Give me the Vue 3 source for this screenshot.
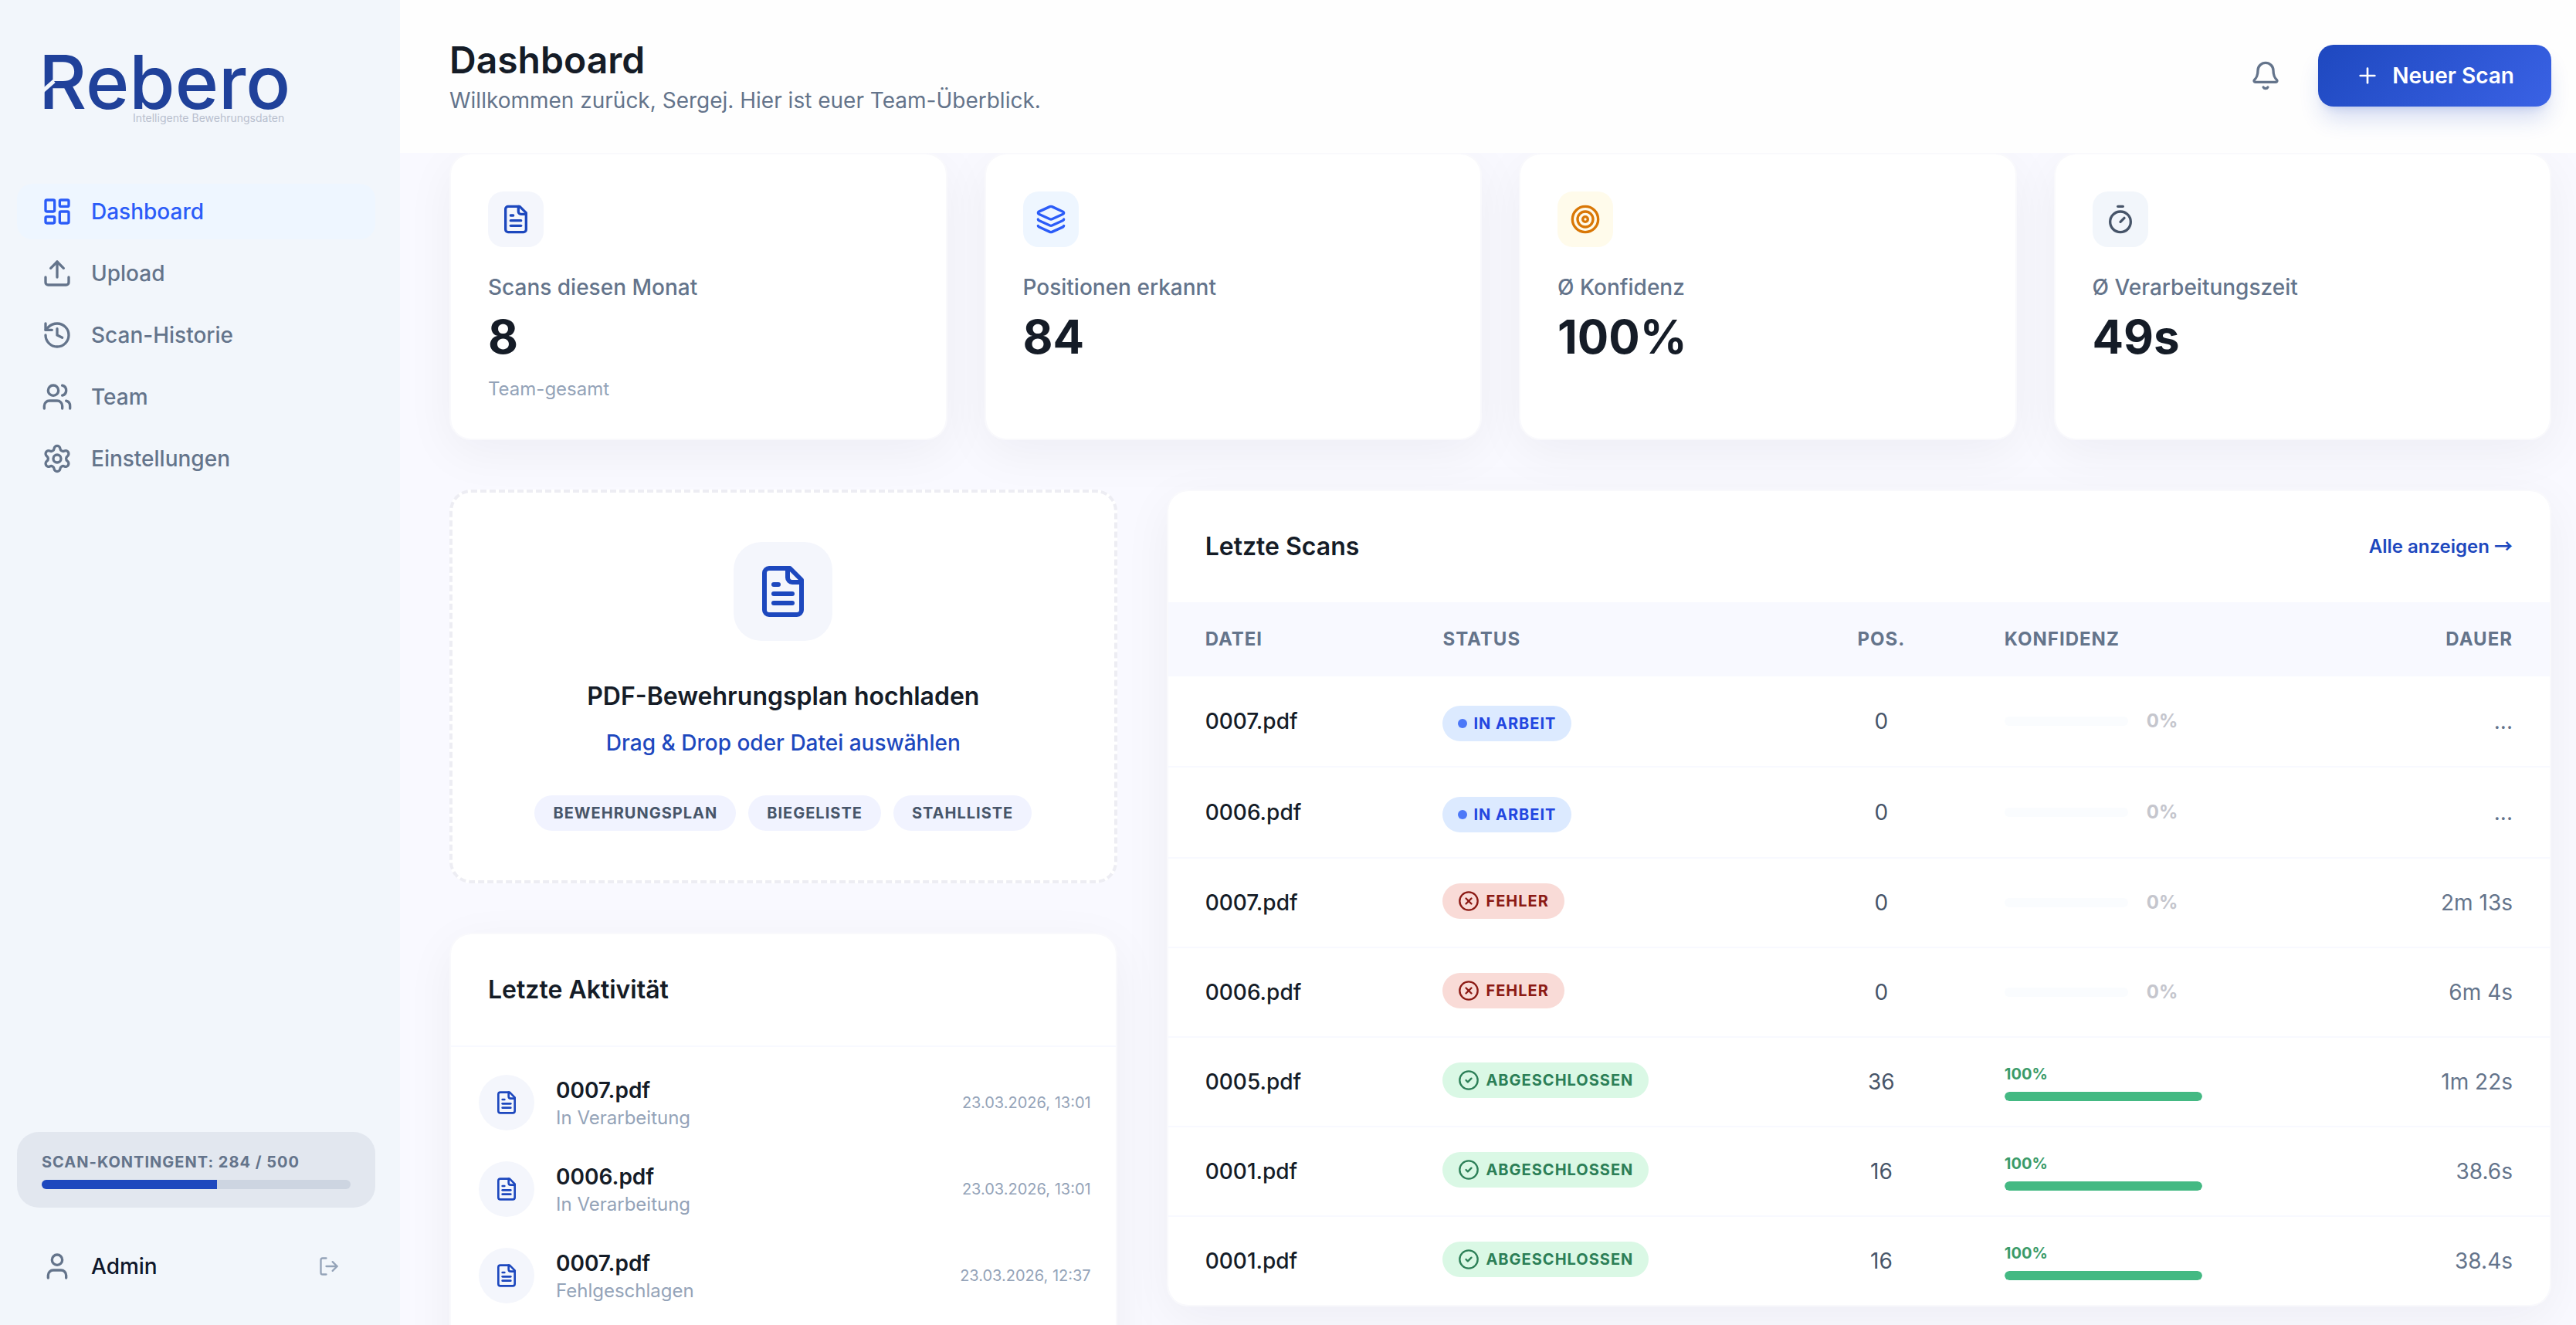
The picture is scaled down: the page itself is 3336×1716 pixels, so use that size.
<script setup>
const icons = {
  dashboard: '<rect width="7" height="9" x="3" y="3" rx="1"/><rect width="7" height="5" x="14" y="3" rx="1"/><rect width="7" height="9" x="14" y="12" rx="1"/><rect width="7" height="5" x="3" y="16" rx="1"/>',
  upload: '<path d="M21 15v4a2 2 0 0 1-2 2H5a2 2 0 0 1-2-2v-4"/><path d="m17 8-5-5-5 5"/><path d="M12 3v12"/>',
  history: '<path d="M3 12a9 9 0 1 0 9-9 9.75 9.75 0 0 0-6.74 2.74L3 8"/><path d="M3 3v5h5"/><path d="M12 7v5l4 2"/>',
  team: '<path d="M16 21v-2a4 4 0 0 0-4-4H6a4 4 0 0 0-4 4v2"/><circle cx="9" cy="7" r="4"/><path d="M22 21v-2a4 4 0 0 0-3-3.87"/><path d="M16 3.13a4 4 0 0 1 0 7.75"/>',
  settings: '<path d="M9.671 4.136a2.34 2.34 0 0 1 4.659 0 2.34 2.34 0 0 0 3.319 1.915 2.34 2.34 0 0 1 2.33 4.033 2.34 2.34 0 0 0 0 3.831 2.34 2.34 0 0 1-2.33 4.033 2.34 2.34 0 0 0-3.319 1.915 2.34 2.34 0 0 1-4.659 0 2.34 2.34 0 0 0-3.32-1.915 2.34 2.34 0 0 1-2.33-4.033 2.34 2.34 0 0 0 0-3.831A2.34 2.34 0 0 1 6.35 6.051a2.34 2.34 0 0 0 3.319-1.915"/><circle cx="12" cy="12" r="3"/>',
  user: '<path d="M19 21v-2a4 4 0 0 0-4-4H9a4 4 0 0 0-4 4v2"/><circle cx="12" cy="7" r="4"/>',
  logout: '<path d="M9 21H5a2 2 0 0 1-2-2V5a2 2 0 0 1 2-2h4"/><path d="m16 17 5-5-5-5"/><path d="M21 12H9"/>',
  bell: '<path d="M10.268 21a2 2 0 0 0 3.464 0"/><path d="M3.262 15.326A1 1 0 0 0 4 17h16a1 1 0 0 0 .74-1.673C19.41 13.956 18 12.499 18 8A6 6 0 0 0 6 8c0 4.499-1.411 5.956-2.738 7.326"/>',
  plus: '<path d="M5 12h14"/><path d="M12 5v14"/>',
  file: '<path d="M15 2H6a2 2 0 0 0-2 2v16a2 2 0 0 0 2 2h12a2 2 0 0 0 2-2V7Z"/><path d="M14 2v4a2 2 0 0 0 2 2h4"/><path d="M10 9H8"/><path d="M16 13H8"/><path d="M16 17H8"/>',
  layers: '<path d="m12.83 2.18a2 2 0 0 0-1.66 0L2.6 6.08a1 1 0 0 0 0 1.83l8.58 3.91a2 2 0 0 0 1.66 0l8.58-3.9a1 1 0 0 0 0-1.83Z"/><path d="M2 12a1 1 0 0 0 .58.91l8.6 3.91a2 2 0 0 0 1.65 0l8.58-3.9A1 1 0 0 0 22 12"/><path d="M2 17a1 1 0 0 0 .58.91l8.6 3.91a2 2 0 0 0 1.65 0l8.58-3.9A1 1 0 0 0 22 17"/>',
  target: '<circle cx="12" cy="12" r="10"/><circle cx="12" cy="12" r="6"/><circle cx="12" cy="12" r="2"/>',
  timer: '<path d="M10 2h4"/><path d="m12 14 3-3"/><circle cx="12" cy="14" r="8"/>',
  error: '<circle cx="12" cy="12" r="10"/><path d="m15 9-6 6"/><path d="m9 9 6 6"/>',
  done: '<circle cx="12" cy="12" r="10"/><path d="m9 12 2 2 4-4"/>',
}

const nav = [
  { label: 'Dashboard', icon: 'dashboard', active: true },
  { label: 'Upload', icon: 'upload' },
  { label: 'Scan-Historie', icon: 'history' },
  { label: 'Team', icon: 'team' },
  { label: 'Einstellungen', icon: 'settings' },
]

const quota = { used: 284, total: 500 }

const stats = [
  { label: 'Scans diesen Monat', value: '8', note: 'Team-gesamt', icon: 'file', tone: 'primary' },
  { label: 'Positionen erkannt', value: '84', icon: 'layers', tone: 'blue' },
  { label: 'Ø Konfidenz', value: '100%', icon: 'target', tone: 'amber' },
  { label: 'Ø Verarbeitungszeit', value: '49s', icon: 'timer', tone: 'slate' },
]

const documentTypes = ['Bewehrungsplan', 'Biegeliste', 'Stahlliste']

const activities = [
  { file: '0007.pdf', state: 'In Verarbeitung', time: '23.03.2026, 13:01' },
  { file: '0006.pdf', state: 'In Verarbeitung', time: '23.03.2026, 13:01' },
  { file: '0007.pdf', state: 'Fehlgeschlagen', time: '23.03.2026, 12:37' },
]

const statusLabels = { working: 'In Arbeit', error: 'Fehler', done: 'Abgeschlossen' }

const scans = [
  { file: '0007.pdf', status: 'working', positions: 0, confidence: 0, duration: '...' },
  { file: '0006.pdf', status: 'working', positions: 0, confidence: 0, duration: '...' },
  { file: '0007.pdf', status: 'error', positions: 0, confidence: 0, duration: '2m 13s' },
  { file: '0006.pdf', status: 'error', positions: 0, confidence: 0, duration: '6m 4s' },
  { file: '0005.pdf', status: 'done', positions: 36, confidence: 100, duration: '1m 22s' },
  { file: '0001.pdf', status: 'done', positions: 16, confidence: 100, duration: '38.6s' },
  { file: '0001.pdf', status: 'done', positions: 16, confidence: 100, duration: '38.4s' },
]
</script>

<template>
  <div class="app">
    <aside class="sidebar">
      <a class="logo" href="#">
        <span class="logo-name">Rebero
          <svg class="logo-cut" viewBox="0 0 20 18" aria-hidden="true"><path d="M0 16 16 2" /></svg>
        </span>
        <span class="logo-claim">Intelligente Bewehrungsdaten</span>
      </a>

      <nav class="nav">
        <a v-for="item in nav" :key="item.label" href="#" class="nav-item" :class="{ active: item.active }">
          <svg class="icon icon-m" viewBox="0 0 24 24" v-html="icons[item.icon]" />
          <span>{{ item.label }}</span>
        </a>
      </nav>

      <div class="quota">
        <p class="quota-label">Scan-Kontingent: {{ quota.used }} / {{ quota.total }}</p>
        <div class="quota-track">
          <div class="quota-fill" :style="{ width: (quota.used / quota.total) * 100 + '%' }" />
        </div>
      </div>

      <div class="account">
        <svg class="icon icon-m" viewBox="0 0 24 24" v-html="icons.user" />
        <span class="account-name">Admin</span>
        <button type="button" class="logout" aria-label="Abmelden">
          <svg class="icon icon-xs" viewBox="0 0 24 24" v-html="icons.logout" />
        </button>
      </div>
    </aside>

    <div class="main">
      <header class="topbar">
        <div>
          <h1>Dashboard</h1>
          <p class="subtitle">Willkommen zurück, Sergej. Hier ist euer Team-Überblick.</p>
        </div>
        <div class="topbar-actions">
          <button type="button" class="bell" aria-label="Benachrichtigungen">
            <svg class="icon icon-m" viewBox="0 0 24 24" v-html="icons.bell" />
          </button>
          <button type="button" class="new-scan">
            <svg class="icon icon-s" viewBox="0 0 24 24" v-html="icons.plus" />
            Neuer Scan
          </button>
        </div>
      </header>

      <main class="content">
        <section class="stats">
          <article v-for="stat in stats" :key="stat.label" class="card stat">
            <div class="stat-icon" :class="stat.tone">
              <svg class="icon icon-m" viewBox="0 0 24 24" v-html="icons[stat.icon]" />
            </div>
            <p class="stat-label">{{ stat.label }}</p>
            <p class="stat-value">{{ stat.value }}</p>
            <p v-if="stat.note" class="stat-note">{{ stat.note }}</p>
          </article>
        </section>

        <section class="columns">
          <div class="column-left">
            <div class="dropzone">
              <div class="dropzone-icon">
                <svg class="icon icon-l" viewBox="0 0 24 24" v-html="icons.file" />
              </div>
              <h2 class="dropzone-title">PDF-Bewehrungsplan hochladen</h2>
              <button type="button" class="dropzone-action">Drag &amp; Drop oder Datei auswählen</button>
              <ul class="tags">
                <li v-for="type in documentTypes" :key="type" class="tag">{{ type }}</li>
              </ul>
            </div>

            <div class="card">
              <div class="card-head divided">
                <h2>Letzte Aktivität</h2>
              </div>
              <ul class="activities">
                <li v-for="(entry, i) in activities" :key="i" class="activity">
                  <div class="activity-icon">
                    <svg class="icon icon-s" viewBox="0 0 24 24" v-html="icons.file" />
                  </div>
                  <div class="activity-text">
                    <p class="activity-file">{{ entry.file }}</p>
                    <p class="activity-state">{{ entry.state }}</p>
                  </div>
                  <time class="activity-time">{{ entry.time }}</time>
                </li>
              </ul>
            </div>
          </div>

          <div class="card column-right">
            <div class="card-head">
              <h2>Letzte Scans</h2>
              <a href="#" class="show-all">Alle anzeigen <span class="arrow">→</span></a>
            </div>
            <table class="scans">
              <colgroup>
                <col class="col-file"><col class="col-status"><col class="col-pos"><col class="col-conf"><col>
              </colgroup>
              <thead>
                <tr>
                  <th>Datei</th>
                  <th>Status</th>
                  <th class="center">Pos.</th>
                  <th>Konfidenz</th>
                  <th class="right">Dauer</th>
                </tr>
              </thead>
              <tbody>
                <tr v-for="(scan, i) in scans" :key="i" :class="scan.status">
                  <td class="file">{{ scan.file }}</td>
                  <td class="status">
                    <span class="badge" :class="scan.status">
                      <span v-if="scan.status === 'working'" class="dot" />
                      <svg v-else class="icon icon-xs" viewBox="0 0 24 24" v-html="icons[scan.status]" />
                      {{ statusLabels[scan.status] }}
                    </span>
                  </td>
                  <td class="positions center">{{ scan.positions }}</td>
                  <td>
                    <div v-if="scan.confidence" class="confidence">
                      <span class="confidence-value">{{ scan.confidence }}%</span>
                      <div class="confidence-track">
                        <div class="confidence-fill" :style="{ width: scan.confidence + '%' }" />
                      </div>
                    </div>
                    <div v-else class="confidence-none">
                      <div class="none-track" />
                      <span>0%</span>
                    </div>
                  </td>
                  <td class="duration right">{{ scan.duration }}</td>
                </tr>
              </tbody>
            </table>
          </div>
        </section>
      </main>
    </div>
  </div>
</template>

<style>
body {
  margin: 0;
  background: #f9f9ff;
}
</style>

<style scoped>
.app {
  display: flex;
  height: 100vh;
  overflow: hidden;
  background: #f9f9ff;
  color: #151c27;
  font-family: Inter, "Liberation Sans", sans-serif;
  font-size: 28px;
  line-height: 40px;
}
.app *,
.app *::before {
  box-sizing: border-box;
}
h1, h2, p, ul {
  margin: 0;
  padding: 0;
}
ul {
  list-style: none;
}
a {
  text-decoration: none;
}
button {
  margin: 0;
  padding: 0;
  border: 0;
  background: none;
  font: inherit;
  cursor: pointer;
}
.icon {
  display: block;
  flex: none;
  fill: none;
  stroke: currentColor;
  stroke-width: 2;
  stroke-linecap: round;
  stroke-linejoin: round;
}
.icon-xs { width: 28px; height: 28px; }
.icon-s { width: 32px; height: 32px; }
.icon-m { width: 40px; height: 40px; }
.icon-l { width: 72px; height: 72px; }

/* Sidebar */
.sidebar {
  display: flex;
  flex-direction: column;
  flex: none;
  width: 518px;
  padding: 66px 32px 40px 22px;
  background: #f2f6fb;
}
.logo {
  display: flex;
  flex-direction: column;
  align-self: flex-start;
  margin: 0 0 78px 28px;
}
.logo-name {
  position: relative;
  color: #20419a;
  font-size: 96px;
  font-weight: 500;
  line-height: 80px;
}
.logo-cut {
  position: absolute;
  left: 4px;
  top: 37px;
  width: 20px;
  height: 18px;
  fill: none;
  stroke: #f2f6fb;
  stroke-width: 5;
}
.logo-claim {
  align-self: flex-end;
  padding-right: 8px;
  color: #b9c0cf;
  font-size: 14px;
  line-height: 14px;
}
.nav {
  display: flex;
  flex-direction: column;
  flex: 1;
  gap: 8px;
}
.nav-item {
  display: flex;
  align-items: center;
  gap: 24px;
  height: 72px;
  padding: 0 32px;
  border-radius: 20px;
  color: #64748b;
  font-weight: 500;
}
.nav-item.active {
  background: #eef6ff;
  color: #2b5cf8;
}
.quota {
  padding: 24px 32px;
  border-radius: 28px;
  background: #e2e7ef;
}
.quota-label {
  color: #64748b;
  font-size: 20px;
  font-weight: 700;
  letter-spacing: 1px;
  line-height: 30px;
  text-transform: uppercase;
}
.quota-track {
  height: 12px;
  margin-top: 8px;
  border-radius: 6px;
  background: #cdd5e1;
  overflow: hidden;
}
.quota-fill {
  height: 100%;
  background: #1d48be;
}
.account {
  display: flex;
  align-items: center;
  gap: 24px;
  height: 72px;
  margin-top: 40px;
  padding: 0 32px;
  color: #64748b;
}
.account-name {
  flex: 1;
  color: #0f172a;
  font-weight: 500;
}
.logout {
  padding: 14px;
  color: #94a3b8;
}

/* Top bar */
.main {
  display: flex;
  flex-direction: column;
  flex: 1;
  min-width: 0;
}
.topbar {
  position: relative;
  z-index: 1;
  display: flex;
  align-items: center;
  justify-content: space-between;
  flex: none;
  padding: 50px 32px 52px 64px;
  background: #fefefe;
}
h1 {
  font-size: 48px;
  font-weight: 600;
  line-height: 56px;
}
.subtitle {
  margin-top: 8px;
  color: #64748b;
  line-height: 32px;
}
.topbar-actions {
  display: flex;
  align-items: center;
  gap: 32px;
  height: 80px;
}
.bell {
  padding: 16px;
  color: #64748b;
}
.new-scan {
  display: flex;
  align-items: center;
  gap: 16px;
  height: 80px;
  padding: 0 48px;
  border-radius: 20px;
  background: linear-gradient(135deg, #1e48bf, #3a62e5);
  box-shadow: 0 20px 30px -6px rgba(30, 72, 191, 0.2), 0 8px 12px -8px rgba(30, 72, 191, 0.2);
  color: #fff;
  font-weight: 600;
}

/* Content */
.content {
  flex: 1;
  padding: 0 32px 64px 64px;
}
.card {
  border: 2px solid #f9f9fc;
  border-radius: 28px;
  background: #fff;
  background-clip: padding-box;
  box-shadow: 0 16px 64px rgba(21, 28, 39, 0.05);
}
.stats {
  display: grid;
  grid-template-columns: repeat(4, 1fr);
  gap: 48px;
}
.stat {
  padding: 48px;
}
.stat-icon {
  display: flex;
  align-items: center;
  justify-content: center;
  width: 72px;
  height: 72px;
  margin-bottom: 32px;
  border-radius: 20px;
}
.stat-icon.primary { background: #f4f6fc; color: #1d48be; }
.stat-icon.blue { background: #eef6ff; color: #2b5cf8; }
.stat-icon.amber { background: #fffbeb; color: #d97706; }
.stat-icon.slate { background: #f2f6fb; color: #475569; }
.stat-label {
  color: #64748b;
  font-weight: 500;
}
.stat-value {
  margin-top: 8px;
  font-size: 60px;
  font-weight: 700;
  line-height: 72px;
}
.stat-note {
  margin-top: 16px;
  color: #94a3b8;
  font-size: 24px;
  line-height: 32px;
}
.columns {
  display: grid;
  grid-template-columns: repeat(12, 1fr);
  align-items: start;
  gap: 64px;
  margin-top: 64px;
}
.column-left {
  display: flex;
  flex-direction: column;
  grid-column: span 4;
  gap: 64px;
}
.column-right {
  grid-column: span 8;
}

/* Upload */
.dropzone {
  display: flex;
  flex-direction: column;
  align-items: center;
  padding: 64px;
  border: 4px dashed #ededf3;
  border-radius: 28px;
  background: #fff;
}
.dropzone-icon {
  display: flex;
  align-items: center;
  justify-content: center;
  width: 128px;
  height: 128px;
  margin-bottom: 48px;
  border-radius: 36px;
  background: #f4f6fc;
  color: #1d48be;
}
h2 {
  font-size: 32px;
  font-weight: 600;
  line-height: 48px;
}
.dropzone-action {
  margin-top: 16px;
  color: #1d48be;
  font-weight: 500;
}
.tags {
  display: flex;
  gap: 16px;
  margin-top: 48px;
}
.tag {
  padding: 8px 24px;
  border-radius: 24px;
  background: #f1f3ff;
  color: #475569;
  font-size: 20px;
  font-weight: 700;
  letter-spacing: 1px;
  line-height: 30px;
  text-transform: uppercase;
}

/* Activity */
.card-head {
  display: flex;
  align-items: center;
  justify-content: space-between;
  padding: 48px;
}
.card-head.divided {
  border-bottom: 2px solid #f8f9ff;
}
.activities {
  padding: 16px 16px 64px;
}
.activity {
  display: flex;
  align-items: center;
  gap: 28px;
  padding: 20px 16px 20px 20px;
}
.activity-icon {
  display: flex;
  align-items: center;
  justify-content: center;
  width: 72px;
  height: 72px;
  border-radius: 50%;
  background: #f4f6fc;
  color: #1d48be;
}
.activity-text {
  flex: 1;
}
.activity-file {
  font-weight: 600;
}
.activity-state {
  color: #94a3b8;
  font-size: 24px;
  line-height: 32px;
}
.activity-time {
  color: #94a3b8;
  font-size: 20px;
}

/* Scans */
.show-all {
  color: #1d48be;
  font-size: 24px;
  font-weight: 600;
}
.arrow {
  font-family: "Noto Sans CJK SC", sans-serif;
  line-height: 1;
}
.scans {
  width: 100%;
  table-layout: fixed;
  border-collapse: separate;
  border-spacing: 0;
}
.col-file { width: 17.2%; }
.col-status { width: 28.2%; }
.col-pos { width: 12.45%; }
.col-conf { width: 25%; }
th {
  height: 96px;
  padding: 0 48px;
  background: #f8f9ff;
  color: #64748b;
  font-size: 24px;
  font-weight: 700;
  letter-spacing: 1px;
  text-align: left;
  text-transform: uppercase;
}
td {
  height: 116px;
  padding: 0 48px;
  border-bottom: 2px solid #f8f9ff;
}
.working td {
  height: 118px;
}
tr:last-child td {
  height: 114px;
  border-bottom: 0;
}
th.center, td.center { text-align: center; }
th.right, td.right { text-align: right; }
.file { font-weight: 500; }
.positions { color: #475569; }
.duration { color: #64748b; }
td.status {
  padding-top: 32px;
  vertical-align: top;
}
.working td.status {
  padding-top: 38px;
}
.badge {
  display: flex;
  align-items: center;
  gap: 8px;
  width: fit-content;
  height: 46px;
  padding: 0 20px;
  border-radius: 23px;
  font-size: 20px;
  font-weight: 700;
  letter-spacing: 1px;
  text-transform: uppercase;
}
.badge.working { background: #dceaff; color: #2346e0; }
.badge.error { background: #f9dbd7; color: #8c1a14; }
.badge.done { background: #daf8e5; color: #2c7f57; }
.dot {
  width: 12px;
  height: 12px;
  border-radius: 50%;
  background: #4c78f8;
}
.confidence-value {
  display: block;
  color: #3a9b69;
  font-size: 20px;
  font-weight: 700;
  line-height: 30px;
}
.confidence-track {
  width: 256px;
  height: 12px;
  margin-top: 8px;
  border-radius: 6px;
  background: #f1f5fa;
  overflow: hidden;
}
.confidence-fill {
  height: 100%;
  border-radius: 6px;
  background: #44b983;
}
.confidence-none {
  display: flex;
  align-items: center;
  gap: 24px;
  color: #c5c6cd;
  font-size: 24px;
  font-weight: 700;
}
.none-track {
  width: 160px;
  height: 12px;
  border-radius: 6px;
  background: #fafcfe;
}
</style>
